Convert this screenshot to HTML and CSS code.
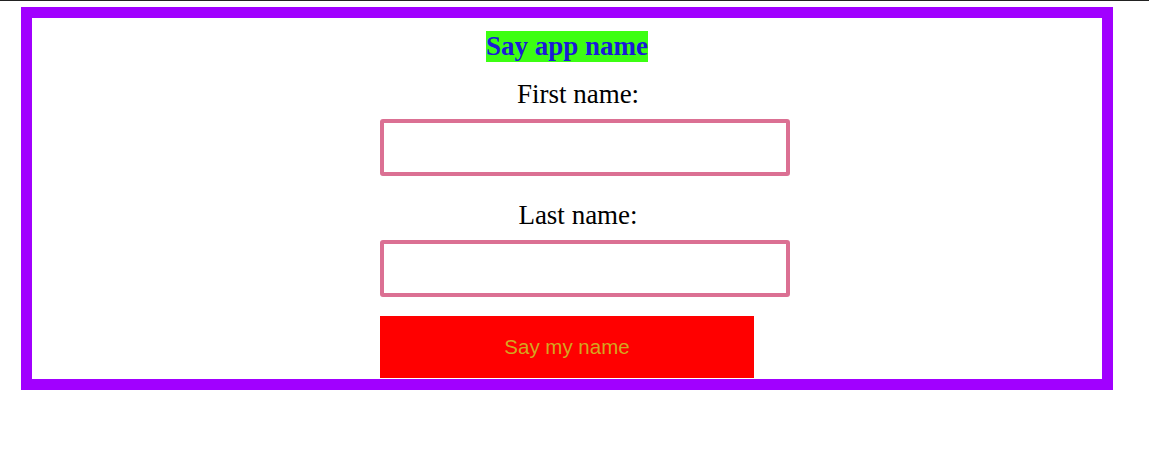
FILE: index.html
```html
<!DOCTYPE html>
<html>
<head>
<meta charset="utf-8">
<link rel="stylesheet" href="styles.css">
</head>
<body>
<div class="page">
  <div class="card">
    <h2 class="title"><span class="title-text">Say app name</span></h2>
    <form class="form">
      <label class="label" for="first">First name:</label>
      <input class="field" id="first" type="text">
      <label class="label label-second" for="last">Last name:</label>
      <input class="field" id="last" type="text">
      <button class="btn" type="button">Say my name</button>
    </form>
  </div>
</div>
</body>
</html>
```
FILE: styles.css
```css
html, body {
  margin: 0;
  padding: 0;
  background: #ffffff;
}
.page {
  border-top: 1px solid #222222;
  padding-top: 6px;
  padding-left: 21px;
  font-family: "Liberation Serif", "Times New Roman", serif;
}
.card {
  box-sizing: border-box;
  width: 1092px;
  border: 11px solid #a100ff;
  padding: 13px 0 1px;
  text-align: center;
}
.title {
  margin: 0;
  font-size: 27px;
  font-weight: bold;
  line-height: 31px;
}
.title-text {
  background: #3cff12;
  color: #1a1ad8;
  display: inline-block;
  line-height: 31px;
}
.form {
  width: 374px;
  margin: 17px auto 0;
  display: flex;
  flex-direction: column;
  align-items: flex-start;
}
.label {
  display: block;
  align-self: stretch;
  padding-left: 22px;
  text-align: center;
  font-size: 27px;
  line-height: 31px;
  color: #000;
}
.label-second {
  margin-top: 24px;
}
.field {
  box-sizing: border-box;
  width: 410px;
  height: 57px;
  margin: 9px 0 0;
  border: 4px solid #db7093;
  border-radius: 3px;
  flex: none;
  background: #fff;
}
.btn {
  box-sizing: border-box;
  width: 374px;
  height: 62px;
  margin-top: 19px;
  border: none;
  background: #ff0000;
  color: #d4a520;
  font-family: "Liberation Sans", Arial, sans-serif;
  font-size: 20.5px;
  padding: 0;
}
```
